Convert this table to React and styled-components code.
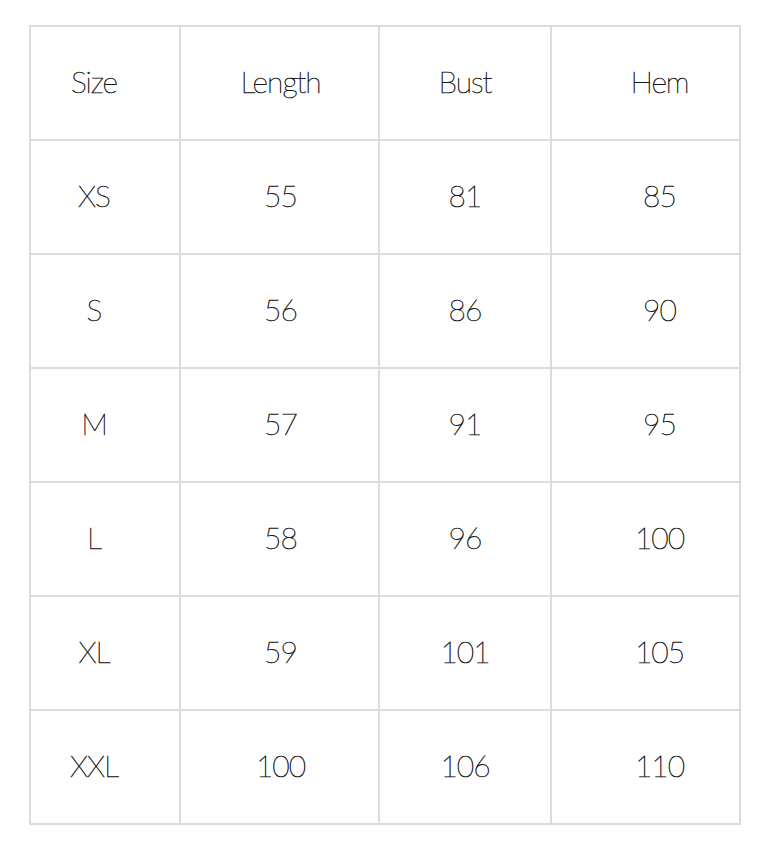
import React from "react"
import styled, { createGlobalStyle } from "styled-components"

const GlobalStyle = createGlobalStyle`
    body {
        margin: 0;
        background: #FFFFFF;
    }
`

const Page = styled.main`
    padding: 25px 0 0 29px;
`

const SizeGrid = styled.div`
    display: inline-grid;
    grid-template-columns: 148px 197px 170px 187px;
    grid-auto-rows: 112px;
    gap: 2px;
    padding: 2px;
    background: #DCDCDC;
`

const Cell = styled.div`
    display: flex;
    align-items: center;
    justify-content: center;
    padding: 0 0 4px 0;
    padding-left: ${({ $shift }) => ($shift > 0 ? $shift * 2 : 0)}px;
    padding-right: ${({ $shift }) => ($shift < 0 ? -$shift * 2 : 0)}px;
    background: #FFFFFF;
    font-family: 'Lato', sans-serif;
    font-weight: 200;
    font-size: 30px;
    color: #1A1A1A;
    -webkit-text-stroke: 0.6px #1A1A1A;
    letter-spacing: -1px;
`

const shifts = [-11, 1, 0, 14]

const rows = [
    ["Size", "Length", "Bust", "Hem"],
    ["XS", "55", "81", "85"],
    ["S", "56", "86", "90"],
    ["M", "57", "91", "95"],
    ["L", "58", "96", "100"],
    ["XL", "59", "101", "105"],
    ["XXL", "100", "106", "110"],
]

export default function App() {
    return (
        <Page>
            <GlobalStyle />
            <SizeGrid>
                {rows.map((row, i) =>
                    row.map((value, j) => (
                        <Cell key={i + "-" + j} $shift={shifts[j]}>{value}</Cell>
                    ))
                )}
            </SizeGrid>
        </Page>
    )
}
